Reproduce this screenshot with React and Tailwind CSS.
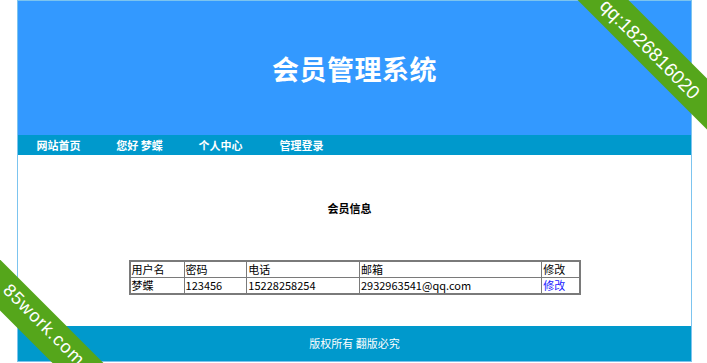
import React from 'react';

const navItems = ['网站首页', '您好 梦蝶', '个人中心', '管理登录'];

const App = () => {
  return (
    <div className="min-h-[363px] bg-white font-['Noto_Sans_CJK_SC',sans-serif]">
      <div className="ml-[17px] w-[675px] border border-[#7cc4ef]">
        <div className="h-[134px] bg-[#3399ff] flex items-center justify-center">
          <h1 className="text-[27px] font-bold text-white leading-none tracking-[0.5px]">
            会员管理系统
          </h1>
        </div>
        <div className="h-[20px] bg-[#0099cc] flex items-center">
          {navItems.map((item) => (
            <a
              key={item}
              className="w-[81px] text-center text-[11px] font-bold text-white leading-[20px]"
            >
              {item}
            </a>
          ))}
        </div>
        <div className="h-[171px] pt-[45px]">
          <h3 className="pr-[10px] text-center text-[11px] font-bold text-black leading-[16px]">
            会员信息
          </h3>
          <table className="mx-auto mt-[44px] w-[452px] border-collapse border-2 border-[#7a7a7a] text-[11px] leading-[15px] text-black">
            <tbody>
              <tr>
                <td className="w-[55px] border border-[#7a7a7a] px-px">用户名</td>
                <td className="w-[63px] border border-[#7a7a7a] px-px">密码</td>
                <td className="w-[113px] border border-[#7a7a7a] px-px">电话</td>
                <td className="w-[183px] border border-[#7a7a7a] px-px">邮箱</td>
                <td className="w-[38px] border border-[#7a7a7a] px-px">修改</td>
              </tr>
              <tr>
                <td className="border border-[#7a7a7a] px-px">梦蝶</td>
                <td className="border border-[#7a7a7a] px-px">123456</td>
                <td className="border border-[#7a7a7a] px-px">15228258254</td>
                <td className="border border-[#7a7a7a] px-px">2932963541@qq.com</td>
                <td className="border border-[#7a7a7a] px-px">
                  <a className="text-[#1a1aff]">修改</a>
                </td>
              </tr>
            </tbody>
          </table>
        </div>
        <div className="h-[35px] bg-[#0099cc] flex items-center justify-center text-[11px] text-white">
          版权所有 翻版必究
        </div>
      </div>

      {/* corner ribbons */}
      <div className="fixed inset-0 overflow-hidden pointer-events-none">
        <div className="absolute left-[521px] top-[30px] w-[260px] h-[36px] rotate-45 bg-[#55a61b] flex items-center justify-center pt-[4px] text-white text-[19px] font-['Liberation_Sans',sans-serif]">
          qq:1826816020
        </div>
        <div className="absolute left-[-88px] top-[309px] w-[260px] h-[36px] rotate-45 bg-[#55a61b] flex items-center justify-center pb-[6px] text-white text-[18px] tracking-[1px] font-['Liberation_Sans',sans-serif]">
          85work.com
        </div>
      </div>
    </div>
  );
};

export default App;
